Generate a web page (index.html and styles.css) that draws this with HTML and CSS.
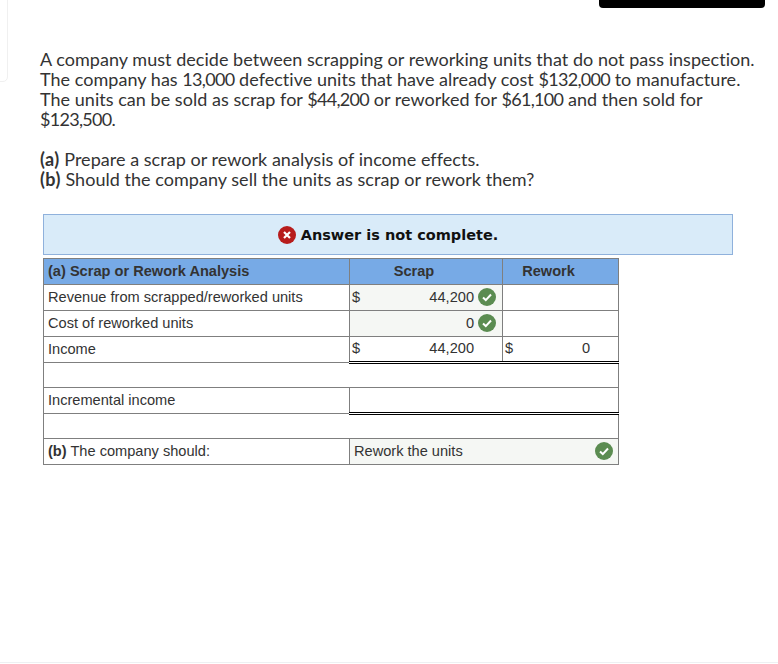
FILE: index.html
```html
<!DOCTYPE html>
<html lang="en">
<head>
<meta charset="utf-8">
<title>Scrap or rework</title>
<link rel="stylesheet" href="styles.css">
</head>
<body>
<div class="top-bar"></div>
<div class="corner-card"></div>
<main class="content">
  <div class="question">
    <p class="para">A company must decide between scrapping or reworking units that do not pass inspection.<br>The company has <span class="fig">13,000</span> defective units that have already cost <span class="fig">$132,000</span> to manufacture.<br>The units can be sold as scrap for <span class="fig">$44,200</span> or reworked for <span class="fig">$61,100</span> and then sold for<br><span class="fig">$123,500.</span></p>
    <p class="para"><b class="lab">(a)</b> Prepare a scrap or rework analysis of income effects.<br><b class="lab">(b)</b> Should the company sell the units as scrap or rework them?</p>
  </div>
  <div class="banner">
    <svg class="icon-x" viewBox="0 0 18 18" width="18" height="18"><circle cx="9" cy="9" r="9" fill="#b71c1c"/><path d="M6 6l6 6M12 6l-6 6" stroke="#fff" stroke-width="2.2" fill="none"/></svg>
    <span>Answer is not complete.</span>
  </div>
  <table class="sheet">
    <colgroup><col class="c1"><col class="c2"><col class="c3"></colgroup>
    <thead>
      <tr><th class="left">(a) Scrap or Rework Analysis</th><th class="head">Scrap</th><th class="head">Rework</th></tr>
    </thead>
    <tbody>
      <tr>
        <td>Revenue from scrapped/reworked units</td>
        <td class="filled money"><div class="val"><span>$</span><span class="num">44,200</span><svg class="ok" viewBox="0 0 18 18" width="18" height="18"><circle cx="9" cy="9" r="9" fill="#5b8c51"/><path d="M5 9.5l2.8 2.6L13 6.5" stroke="#fff" stroke-width="2" fill="none"/></svg></div></td>
        <td></td>
      </tr>
      <tr>
        <td>Cost of reworked units</td>
        <td class="filled money"><div class="val"><span></span><span class="num">0</span><svg class="ok" viewBox="0 0 18 18" width="18" height="18"><circle cx="9" cy="9" r="9" fill="#5b8c51"/><path d="M5 9.5l2.8 2.6L13 6.5" stroke="#fff" stroke-width="2" fill="none"/></svg></div></td>
        <td></td>
      </tr>
      <tr>
        <td>Income</td>
        <td class="total money"><div class="val"><span>$</span><span class="num">44,200</span><span class="ok-gap"></span></div></td>
        <td class="total money"><div class="val"><span>$</span><span class="num">0</span><span class="ok-gap"></span></div></td>
      </tr>
      <tr class="blank"><td colspan="3"></td></tr>
      <tr>
        <td>Incremental income</td>
        <td class="total" colspan="2"></td>
      </tr>
      <tr class="blank"><td colspan="3"></td></tr>
      <tr>
        <td><b>(b)</b> The company should:</td>
        <td class="filled wide" colspan="2"><div class="val"><span>Rework the units</span><svg class="ok" viewBox="0 0 18 18" width="18" height="18"><circle cx="9" cy="9" r="9" fill="#5b8c51"/><path d="M5 9.5l2.8 2.6L13 6.5" stroke="#fff" stroke-width="2" fill="none"/></svg></div></td>
      </tr>
    </tbody>
  </table>
</main>
<div class="bottom-line"></div>
</body>
</html>
```
FILE: styles.css
```css
html, body { margin: 0; padding: 0; background: #fff; }
body { width: 778px; height: 664px; overflow: hidden; position: relative; }
.top-bar { position: absolute; top: 0; left: 599px; width: 166px; height: 8px; background: #000; border-radius: 0 0 4px 4px; }
.corner-card { position: absolute; top: -10px; left: -10px; width: 16px; height: 90px; border: 1px solid #f0f0f0; border-radius: 5px; }
.bottom-line { position: absolute; left: 0; right: 0; bottom: 1px; height: 1px; background: #eef0f2; }
.content { padding: 49px 0 0 40px; }
.question { font-family: Lato, "Liberation Sans", sans-serif; font-size: 18px; line-height: 20px; color: #333; letter-spacing: 0.035px; }
.fig { letter-spacing: -0.7px; }
.lab { letter-spacing: 0.4px; }
.para { margin: 0 0 20px; white-space: nowrap; }
.banner { margin: 25px 0 3px 3px; width: 688px; height: 39px; display: flex; align-items: center; justify-content: center; gap: 5px; background: #d9ebf9; border: 1px solid #8fb1dc; font-family: "DejaVu Sans", sans-serif; font-weight: 700; font-size: 14.5px; color: #111; }
.icon-x { display: block; }
.sheet { margin-left: 3px; width: 575px; border-collapse: collapse; table-layout: fixed; font-family: "Liberation Sans", sans-serif; font-size: 14.6px; color: #333; }
.c1 { width: 306px; }
.c2 { width: 153px; }
.c3 { width: 116px; }
.sheet th, .sheet td { border: 1px solid #7f7f7f; height: 25px; padding: 0 4px 2px; box-sizing: border-box; }
.sheet tr { height: 26px; }
.sheet tr.blank { height: 25px; }
.sheet th { background: #77aae6; font-weight: 700; text-align: center; }
.sheet th.head { padding-right: 28px; }
.sheet th.left { text-align: left; }
.sheet td.money { padding-left: 2px; padding-right: 6px; }
.sheet td.wide { padding-right: 5px; }
.filled { background: #f5f7f4; }
.sheet td.total { border-bottom: 3px double #000; }
.val { display: flex; align-items: center; justify-content: space-between; }
.num { margin-left: auto; }
.ok { margin-left: 4px; display: block; }
.ok-gap { width: 22px; flex: none; }
```
